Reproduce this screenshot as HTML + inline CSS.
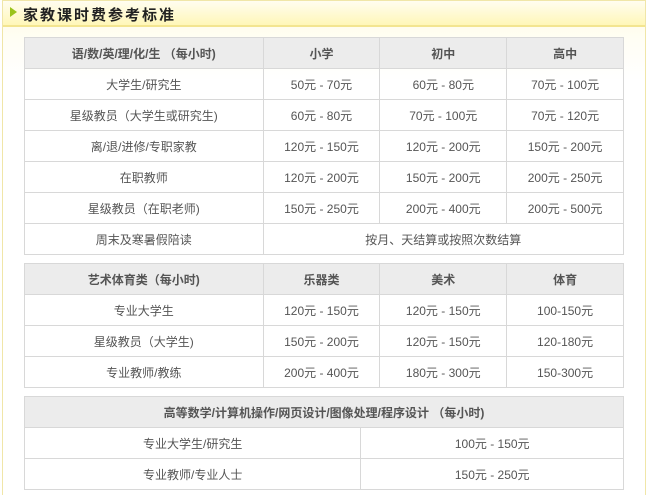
<!DOCTYPE html>
<html><head><meta charset="utf-8"><style>
body{margin:0;width:648px;height:494px;background:#fff;font-family:"Liberation Sans","Noto Sans CJK SC",sans-serif;overflow:hidden}
.box{position:absolute;left:2px;top:0;width:642px;height:494px;border-left:1px solid #f0e6a8;border-right:1px solid #f0e6a8;border-top:1px solid #f0e6a8;background:linear-gradient(#fffbe0 0,#fffef5 40px,#fff 80px)}
.hd{position:absolute;left:0;top:0;width:642px;height:24px;background:linear-gradient(#fffdf0,#fff7b8);border-bottom:2px solid #f3e590}
.tri{position:absolute;left:7px;top:6px;width:0;height:0;border-left:7px solid #9ac31c;border-top:5px solid transparent;border-bottom:5px solid transparent}
.ttl{position:absolute;left:20px;top:3px;font-size:15px;font-weight:bold;color:#222;letter-spacing:2px}
table{position:absolute;left:24px;border-collapse:collapse;font-size:12px;color:#555}
td{border:1px solid #d8d8d8;text-align:center;height:30px;padding:0}
tr.h td{background:#ececec;font-weight:bold}
</style></head><body>
<div class="box"><div class="hd"><div class="tri"></div><div class="ttl">家教课时费参考标准</div></div></div>
<table style="top:37px;width:600px">
<colgroup><col style="width:239px"><col style="width:117px"><col style="width:127px"><col style="width:117px"></colgroup>
<tr class="h"><td>语/数/英/理/化/生 （每小时)</td><td>小学</td><td>初中</td><td>高中</td></tr>
<tr><td>大学生/研究生</td><td>50元 - 70元</td><td>60元 - 80元</td><td>70元 - 100元</td></tr>
<tr><td>星级教员（大学生或研究生)</td><td>60元 - 80元</td><td>70元 - 100元</td><td>70元 - 120元</td></tr>
<tr><td>离/退/进修/专职家教</td><td>120元 - 150元</td><td>120元 - 200元</td><td>150元 - 200元</td></tr>
<tr><td>在职教师</td><td>120元 - 200元</td><td>150元 - 200元</td><td>200元 - 250元</td></tr>
<tr><td>星级教员（在职老师)</td><td>150元 - 250元</td><td>200元 - 400元</td><td>200元 - 500元</td></tr>
<tr><td>周末及寒暑假陪读</td><td colspan="3">按月、天结算或按照次数结算</td></tr>
</table>
<table style="top:263px;width:600px">
<colgroup><col style="width:239px"><col style="width:117px"><col style="width:127px"><col style="width:117px"></colgroup>
<tr class="h"><td>艺术体育类（每小时)</td><td>乐器类</td><td>美术</td><td>体育</td></tr>
<tr><td>专业大学生</td><td>120元 - 150元</td><td>120元 - 150元</td><td>100-150元</td></tr>
<tr><td>星级教员（大学生)</td><td>150元 - 200元</td><td>120元 - 150元</td><td>120-180元</td></tr>
<tr><td>专业教师/教练</td><td>200元 - 400元</td><td>180元 - 300元</td><td>150-300元</td></tr>
</table>
<table style="top:396px;width:600px">
<colgroup><col style="width:337px"><col style="width:263px"></colgroup>
<tr class="h"><td colspan="2">高等数学/计算机操作/网页设计/图像处理/程序设计 （每小时)</td></tr>
<tr><td>专业大学生/研究生</td><td>100元 - 150元</td></tr>
<tr><td>专业教师/专业人士</td><td>150元 - 250元</td></tr>
</table>
</body></html>
